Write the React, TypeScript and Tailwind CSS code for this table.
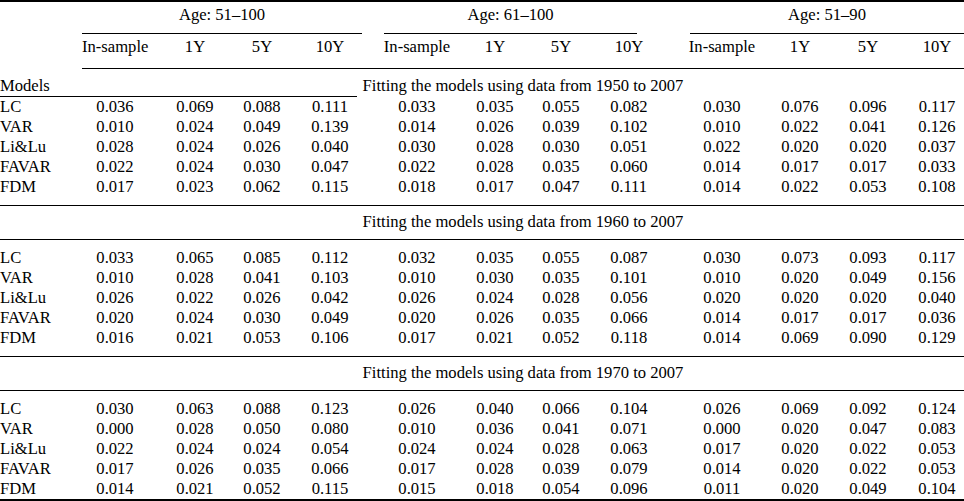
const colWidths = [
  "w-[82px]",
  "w-[66px]",
  "w-[94px]",
  "w-[40px]",
  "w-[96px]",
  "w-[78px]",
  "w-[78px]",
  "w-[54px]",
  "w-[82px]",
  "w-[104px]",
  "w-[52px]",
  "w-[84px]",
  "w-[54px]",
];

const subHeaders = ["In-sample", "1Y", "5Y", "10Y"];

const blocks = [
  {
    title: "Fitting the models using data from 1950 to 2007",
    rows: [
      ["LC", "0.036", "0.069", "0.088", "0.111", "0.033", "0.035", "0.055", "0.082", "0.030", "0.076", "0.096", "0.117"],
      ["VAR", "0.010", "0.024", "0.049", "0.139", "0.014", "0.026", "0.039", "0.102", "0.010", "0.022", "0.041", "0.126"],
      ["Li&Lu", "0.028", "0.024", "0.026", "0.040", "0.030", "0.028", "0.030", "0.051", "0.022", "0.020", "0.020", "0.037"],
      ["FAVAR", "0.022", "0.024", "0.030", "0.047", "0.022", "0.028", "0.035", "0.060", "0.014", "0.017", "0.017", "0.033"],
      ["FDM", "0.017", "0.023", "0.062", "0.115", "0.018", "0.017", "0.047", "0.111", "0.014", "0.022", "0.053", "0.108"],
    ],
  },
  {
    title: "Fitting the models using data from 1960 to 2007",
    rows: [
      ["LC", "0.033", "0.065", "0.085", "0.112", "0.032", "0.035", "0.055", "0.087", "0.030", "0.073", "0.093", "0.117"],
      ["VAR", "0.010", "0.028", "0.041", "0.103", "0.010", "0.030", "0.035", "0.101", "0.010", "0.020", "0.049", "0.156"],
      ["Li&Lu", "0.026", "0.022", "0.026", "0.042", "0.026", "0.024", "0.028", "0.056", "0.020", "0.020", "0.020", "0.040"],
      ["FAVAR", "0.020", "0.024", "0.030", "0.049", "0.020", "0.026", "0.035", "0.066", "0.014", "0.017", "0.017", "0.036"],
      ["FDM", "0.016", "0.021", "0.053", "0.106", "0.017", "0.021", "0.052", "0.118", "0.014", "0.069", "0.090", "0.129"],
    ],
  },
  {
    title: "Fitting the models using data from 1970 to 2007",
    rows: [
      ["LC", "0.030", "0.063", "0.088", "0.123", "0.026", "0.040", "0.066", "0.104", "0.026", "0.069", "0.092", "0.124"],
      ["VAR", "0.000", "0.028", "0.050", "0.080", "0.010", "0.036", "0.041", "0.071", "0.000", "0.020", "0.047", "0.083"],
      ["Li&Lu", "0.022", "0.024", "0.024", "0.054", "0.024", "0.024", "0.028", "0.063", "0.017", "0.020", "0.022", "0.053"],
      ["FAVAR", "0.017", "0.026", "0.035", "0.066", "0.017", "0.028", "0.039", "0.079", "0.014", "0.020", "0.022", "0.053"],
      ["FDM", "0.014", "0.021", "0.052", "0.115", "0.015", "0.018", "0.054", "0.096", "0.011", "0.020", "0.049", "0.104"],
    ],
  },
];

// 一行数据
function Row({ cells }: { cells: string[] }) {
  return (
    <div className="flex h-[20px] leading-[20px]">
      {cells.map((c, i) => (
        <div
          key={i}
          className={`${colWidths[i]} shrink-0 whitespace-nowrap ${
            i === 0 ? "text-left" : "text-center"
          }`}
        >
          {c}
        </div>
      ))}
    </div>
  );
}

export default function App() {
  const headerCells = ["", ...subHeaders, ...subHeaders, ...subHeaders];

  return (
    <div className="w-[964px] h-[501px] bg-white text-black text-[16.6px] font-['Liberation_Serif','Times_New_Roman',serif]">
      {/* 顶部粗线 */}
      <div className="h-[2px] bg-black"></div>

      {/* 年龄分组 */}
      <div className="flex h-[26px] leading-[26px] whitespace-nowrap">
        <div className="w-[82px] shrink-0"></div>
        <div className="w-[280px] shrink-0 text-center">Age: 51–100</div>
        <div className="w-[22px] shrink-0"></div>
        <div className="w-[253px] shrink-0 text-center">Age: 61–100</div>
        <div className="w-[53px] shrink-0"></div>
        <div className="w-[274px] shrink-0 text-center">Age: 51–90</div>
      </div>
      <div className="flex mt-[5px] h-px">
        <div className="w-[82px] shrink-0"></div>
        <div className="w-[280px] shrink-0 bg-black"></div>
        <div className="w-[22px] shrink-0"></div>
        <div className="w-[253px] shrink-0 bg-black"></div>
        <div className="w-[53px] shrink-0"></div>
        <div className="w-[274px] shrink-0 bg-black"></div>
      </div>

      {/* 子标题 */}
      <div className="flex h-[26px] leading-[26px]">
        {headerCells.map((c, i) => (
          <div
            key={i}
            className={`${colWidths[i]} shrink-0 whitespace-nowrap text-center`}
          >
            {c}
          </div>
        ))}
      </div>
      <div className="flex mt-[8px] h-px">
        <div className="w-[82px] shrink-0"></div>
        <div className="flex-1 bg-black"></div>
      </div>

      {/* Models 行 */}
      <div className="flex mt-[7px] h-[20px] leading-[20px] whitespace-nowrap">
        <div className="w-[82px] shrink-0">Models</div>
        <div className="flex-1 text-center">{blocks[0].title}</div>
      </div>
      <div className="w-[357px] h-px bg-black"></div>

      {blocks[0].rows.map((r, i) => (
        <Row key={i} cells={r} />
      ))}

      {blocks.slice(1).map((b, bi) => (
        <div key={bi}>
          <div className="mt-[8px] h-px bg-black"></div>
          <div className="flex mt-[6px] h-[20px] leading-[20px] whitespace-nowrap">
            <div className="w-[82px] shrink-0"></div>
            <div className="flex-1 text-center">{b.title}</div>
          </div>
          <div className="mt-[7px] h-px bg-black"></div>
          <div className="pt-[8px]">
            {b.rows.map((r, i) => (
              <Row key={i} cells={r} />
            ))}
          </div>
        </div>
      ))}

      {/* 底部粗线 */}
      <div className="h-[2px] bg-black"></div>
    </div>
  );
}
